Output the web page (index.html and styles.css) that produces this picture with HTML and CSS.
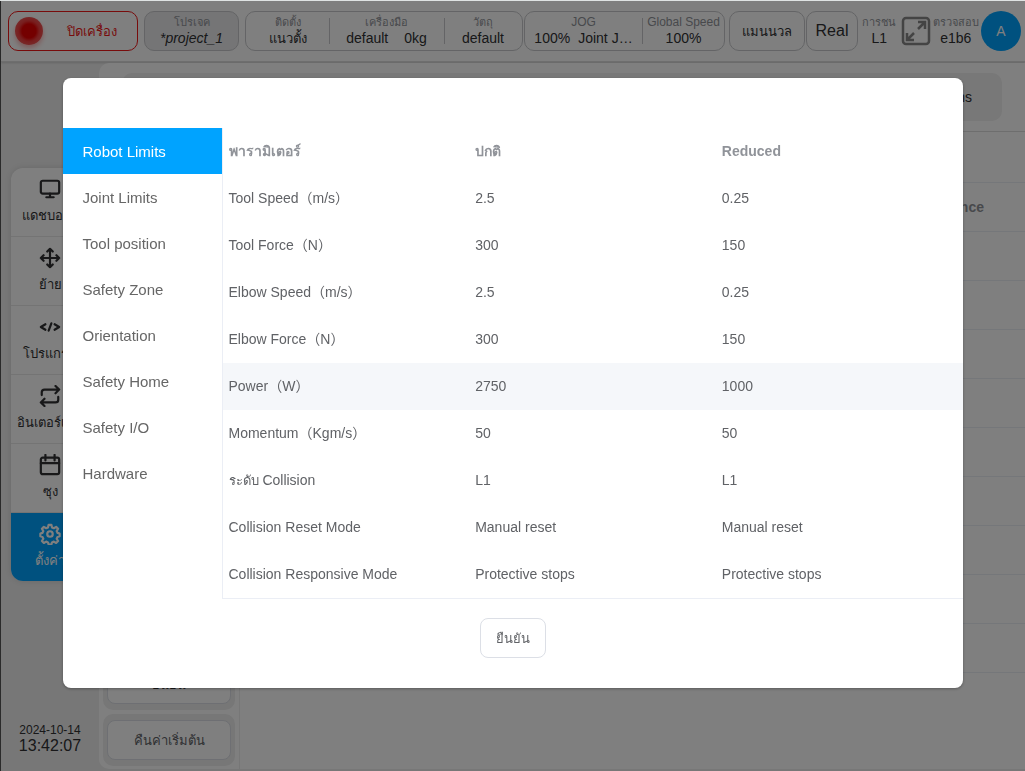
FILE: index.html
```html
<!DOCTYPE html>
<html lang="th">
<head>
    <meta charset="UTF-8">
    <meta name="viewport" content="width=device-width, initial-scale=1.0">
    <title>Robot Limits</title>
    <link rel="stylesheet" href="styles.css">
</head>
<body>
    <div class="app">
        <header class="topbar">
            <button class="box power"><span class="led"></span><span class="power-text">ปิดเครื่อง</span></button>
            <button class="box project"><span class="label thai">โปรเจค</span><em class="value">*project_1</em></button>
            <div class="cluster">
                <div class="box setup">
                    <div class="stat mount"><span class="label thai">ติดตั้ง</span><span class="value thai">แนวตั้ง</span></div>
                    <span class="divider"></span>
                    <div class="stat wide"><span class="label thai">เครื่องมือ</span><span class="value pair"><span>default</span><span>0kg</span></span></div>
                    <span class="divider"></span>
                    <div class="stat"><span class="label thai">วัตถุ</span><span class="value">default</span></div>
                </div>
                <div class="box speed">
                    <div class="stat wide"><span class="label">JOG</span><span class="value jog"><span>100%</span><span>Joint J…</span></span></div>
                    <span class="divider"></span>
                    <div class="stat"><span class="label">Global Speed</span><span class="value">100%</span></div>
                </div>
            </div>
            <div class="cluster end">
                <button class="box manual">แมนนวล</button>
                <button class="box real">Real</button>
                <div class="stat info"><span class="label thai">การชน</span><span class="value">L1</span></div>
                <button class="expand" aria-label="Full screen">
                    <svg viewBox="0 0 30 30" width="30" height="30" fill="none" stroke="currentColor" stroke-width="2.500">
                        <rect x="2" y="2" width="26" height="26" rx="3"/>
                        <path d="M17 13L24 6M17 6H24V13M13 17L6 24M6 17V24H13"/>
                    </svg>
                </button>
                <div class="stat"><span class="label thai">ตรวจสอบ</span><span class="value">e1b6</span></div>
                <button class="avatar">A</button>
            </div>
        </header>

        <div class="main">
            <aside class="sidebar">
                <nav class="nav">
                    <a href="#" class="nav-item">
                        <svg viewBox="0 0 24 24"><rect x="2" y="3" width="20" height="14" rx="2"/><path d="M12 17v4M8 21h8"/></svg>
                        <span>แดชบอร์ด</span>
                    </a>
                    <a href="#" class="nav-item">
                        <svg viewBox="0 0 24 24"><path d="M12 2v20M2 12h20M9 5l3-3 3 3M9 19l3 3 3-3M5 9l-3 3 3 3M19 9l3 3-3 3"/></svg>
                        <span>ย้าย</span>
                    </a>
                    <a href="#" class="nav-item">
                        <svg viewBox="0 0 24 24"><path d="M7 9l-5 3 5 3M17 9l5 3-5 3M13.500 8l-3 8"/></svg>
                        <span>โปรแกรม</span>
                    </a>
                    <a href="#" class="nav-item">
                        <svg viewBox="0 0 24 24"><path d="M18 1l4 4-4 4M3 11V8a3 3 0 0 1 3-3h16M6 23l-4-4 4-4M21 13v3a3 3 0 0 1-3 3H2"/></svg>
                        <span>อินเตอร์เฟซ</span>
                    </a>
                    <a href="#" class="nav-item">
                        <svg viewBox="0 0 24 24"><rect x="2" y="4" width="20" height="18" rx="2"/><path d="M7 1v6M17 1v6M2 10h20"/></svg>
                        <span>ซุง</span>
                    </a>
                    <a href="#" class="nav-item active">
                        <svg viewBox="0 0 24 24"><circle cx="12" cy="12" r="3"/><path d="M10.500 2h3l.7 2.800 2 .9 2.500-1.500 2.100 2.100-1.500 2.500.9 2 2.300.7v3l-2.300.7-.9 2 1.500 2.500-2.100 2.100-2.500-1.500-2 .9-.7 2.300h-3l-.7-2.300-2-.9-2.500 1.500-2.100-2.100 1.500-2.500-.9-2-2.300-.7v-3l2.300-.7.9-2-1.500-2.500 2.100-2.100 2.500 1.500 2-.9z"/></svg>
                        <span>ตั้งค่า</span>
                    </a>
                </nav>
                <div class="clock">
                    <div class="date">2024-10-14</div>
                    <div class="time">13:42:07</div>
                </div>
            </aside>

            <main class="panel">
                <div class="tabs-wrap">
                    <div class="tabs"><a href="#">Permissions</a></div>
                </div>
                <div class="content">
                    <div class="actions">
                        <div class="action"><button class="dark">ยืนยัน</button></div>
                        <div class="action"><button>คืนค่าเริ่มต้น</button></div>
                    </div>
                    <div class="grid">
                        <div class="grid-row"></div>
                        <div class="grid-row head">Tolerance</div>
                        <div class="grid-row"></div>
                        <div class="grid-row"></div>
                        <div class="grid-row"></div>
                        <div class="grid-row"></div>
                        <div class="grid-row"></div>
                        <div class="grid-row"></div>
                        <div class="grid-row"></div>
                        <div class="grid-row"></div>
                        <div class="grid-row"></div>
                    </div>
                </div>
            </main>
        </div>
    </div>

    <div class="overlay">
        <div class="dialog" role="dialog" aria-label="Robot Limits">
            <div class="dialog-body">
                <nav class="menu">
                    <a href="#" class="active">Robot Limits</a>
                    <a href="#">Joint Limits</a>
                    <a href="#">Tool position</a>
                    <a href="#">Safety Zone</a>
                    <a href="#">Orientation</a>
                    <a href="#">Safety Home</a>
                    <a href="#">Safety I/O</a>
                    <a href="#">Hardware</a>
                </nav>
                <table class="limits">
                    <thead>
                        <tr><th>พารามิเตอร์</th><th>ปกติ</th><th>Reduced</th></tr>
                    </thead>
                    <tbody>
                        <tr><td>Tool Speed（m/s）</td><td>2.5</td><td>0.25</td></tr>
                        <tr><td>Tool Force（N）</td><td>300</td><td>150</td></tr>
                        <tr><td>Elbow Speed（m/s）</td><td>2.5</td><td>0.25</td></tr>
                        <tr><td>Elbow Force（N）</td><td>300</td><td>150</td></tr>
                        <tr class="hover"><td>Power（W）</td><td>2750</td><td>1000</td></tr>
                        <tr><td>Momentum（Kgm/s）</td><td>50</td><td>50</td></tr>
                        <tr><td><span class="thai">ระดับ</span> Collision</td><td>L1</td><td>L1</td></tr>
                        <tr><td>Collision Reset Mode</td><td>Manual reset</td><td>Manual reset</td></tr>
                        <tr><td>Collision Responsive Mode</td><td>Protective stops</td><td>Protective stops</td></tr>
                    </tbody>
                </table>
            </div>
            <div class="dialog-footer">
                <button class="confirm">ยืนยัน</button>
            </div>
        </div>
    </div>
</body>
</html>
```
FILE: styles.css
```css
* {
    box-sizing: border-box;
}
body {
    margin: 0;
    font-family: "Liberation Sans", Arial, "Noto Sans CJK SC", sans-serif;
    font-size: 14px;
    color: #303133;
    background: #fff;
    border-top: 1px solid #dfe3e3;
    overflow: hidden;
}
button {
    font-family: inherit;
    color: inherit;
    cursor: pointer;
}
a {
    color: inherit;
    text-decoration: none;
}
.app {
    height: calc(100vh - 1px);
    display: flex;
    flex-direction: column;
    border-left: 1px solid #555;
    background: #eee;
}

/* top bar */
.topbar {
    height: 61px;
    flex-shrink: 0;
    display: flex;
    align-items: center;
    gap: 4px;
    padding: 0 4px 0 7px;
    background: #fff;
    border-bottom: 1px solid #ddd;
    box-shadow: 0 1px 2px rgba(0, 0, 0, 0.15);
}
.box {
    height: 40px;
    flex-shrink: 0;
    border: 1px solid #c8c9cc;
    border-radius: 10px;
    background: #fff;
    padding: 0;
    display: flex;
    align-items: center;
    justify-content: center;
}
.power {
    width: 130px;
    margin-right: 2px;
    border-color: #f01818;
    color: #f01818;
    font-size: 13px;
    padding: 0 6px;
}
.led {
    width: 28px;
    height: 28px;
    border-radius: 50%;
    background: radial-gradient(circle, #e80000 35%, #f03c3c 52%, #f07878);
    box-shadow: 0 3px 5px rgba(240, 0, 0, 0.3);
}
.power-text {
    flex: 1;
    padding-left: 10px;
}
.project {
    width: 95px;
    margin-right: 2px;
    flex-direction: column;
    background: #eaeaec;
}
.label {
    font-size: 12px;
    line-height: 15px;
    color: #909399;
    white-space: nowrap;
}
.label.thai {
    font-size: 11px;
}
.value {
    font-size: 14px;
    line-height: 17px;
    color: #303133;
    white-space: nowrap;
}
.value.thai {
    font-size: 13px;
}
.cluster {
    display: flex;
    align-items: center;
    gap: 1px;
}
.end {
    flex: 1;
}
.setup {
    width: 278px;
}
.speed {
    width: 201px;
}
.stat {
    flex: 1 0 78px;
    display: flex;
    flex-direction: column;
    align-items: center;
}
.stat.mount {
    flex-basis: 83px;
}
.stat.wide {
    flex-basis: 114px;
}
.divider {
    width: 1px;
    height: 26px;
    background: #c8c9cc;
}
.end .stat {
    flex: 1 0 auto;
}
.stat.info {
    padding: 0 2px;
}
.pair {
    display: flex;
    gap: 16px;
}
.jog {
    display: flex;
    gap: 8px;
}
.manual {
    width: 76px;
    font-size: 13px;
}
.real {
    width: 52px;
    font-size: 16px;
}
.expand {
    border: 0;
    padding: 0;
    background: none;
    color: #888;
    height: 30px;
}
.avatar {
    width: 40px;
    height: 40px;
    flex-shrink: 0;
    border: 0;
    border-radius: 50%;
    background: #00a3ff;
    color: #fff;
    font-size: 14px;
    padding: 0;
}

/* left navigation */
.main {
    flex: 1;
    min-height: 0;
    display: flex;
}
.sidebar {
    width: 98px;
    display: flex;
    flex-direction: column;
    justify-content: space-between;
    padding: 106px 10px 16px;
}
.nav {
    border-radius: 12px;
    overflow: hidden;
    background: #fff;
    box-shadow: 0 0 6px rgba(0, 0, 0, 0.12);
}
.nav-item {
    height: 69px;
    display: flex;
    flex-direction: column;
    align-items: center;
    padding-top: 10px;
    gap: 6px;
    border-bottom: 1px solid #e8e8e8;
    font-size: 13px;
    line-height: 20px;
    white-space: nowrap;
}
.nav-item svg {
    width: 22px;
    height: 22px;
    flex-shrink: 0;
    fill: none;
    stroke: currentColor;
    stroke-width: 2.4;
    stroke-linecap: round;
    stroke-linejoin: round;
}
.nav-item.active {
    height: 68px;
    background: #00a3ff;
    color: #fff;
    border-bottom: 0;
}
.clock {
    text-align: center;
    white-space: nowrap;
}
.date {
    font-size: 12px;
    line-height: 14px;
}
.time {
    font-size: 16px;
    line-height: 18px;
}

/* page behind the dialog */
.panel {
    flex: 1;
    display: flex;
    flex-direction: column;
    margin: 1px 0 2px;
    background: #fff;
    border-radius: 10px 0 0 10px;
}
.tabs-wrap {
    padding: 10px 23px;
    border-bottom: 1px solid #ddd;
}
.tabs {
    height: 48px;
    display: flex;
    align-items: center;
    justify-content: flex-end;
    padding-right: 30px;
    border-radius: 10px;
    background: #f0f0f0;
}
.content {
    flex: 1;
    min-height: 0;
    display: flex;
}
.actions {
    width: 141px;
    display: flex;
    flex-direction: column;
    justify-content: flex-end;
    gap: 4px;
    padding: 3px 4px;
    border-right: 1px solid #eee;
}
.action {
    padding: 6px 4px;
    border-radius: 10px;
    background: #eee;
}
.action button {
    display: block;
    width: 100%;
    height: 40px;
    border: 1px solid #dcdfe6;
    border-radius: 8px;
    background: #fff;
    color: #606266;
    font-size: 13px;
}
.action .dark {
    color: #303133;
}
.grid {
    flex: 1;
}
.grid-row {
    height: 49px;
    border-bottom: 1px solid #ebeef5;
}
.grid-row:first-child {
    height: 51px;
}
.grid-row.head {
    padding-right: 41px;
    text-align: right;
    line-height: 48px;
    font-weight: bold;
    color: #909399;
}

/* dialog */
.overlay {
    position: fixed;
    top: 1px;
    right: 0;
    bottom: 0;
    left: 0;
    display: flex;
    align-items: flex-start;
    justify-content: center;
    padding-top: 10vh;
    background: rgba(0, 0, 0, 0.5);
}
.dialog {
    width: 90%;
    max-width: 900px;
    padding: 50px 0 30px;
    background: #fff;
    border-radius: 8px;
    box-shadow: 0 1px 3px rgba(0, 0, 0, 0.3);
}
.dialog-body {
    display: flex;
}
.menu {
    width: 159px;
    flex-shrink: 0;
}
.menu a {
    display: block;
    height: 46px;
    padding-left: 20px;
    font-size: 15px;
    line-height: 48px;
    color: #666;
}
.menu a.active {
    background: #00a3ff;
    color: #fff;
}
.limits {
    flex: 1;
    table-layout: fixed;
    border-collapse: separate;
    border-spacing: 0;
    border-left: 1px solid #ebeef5;
    border-bottom: 1px solid #ebeef5;
    color: #606266;
    font-size: 14px;
}
.limits th,
.limits td {
    height: 47px;
    padding: 0 6px;
    text-align: left;
    line-height: 23px;
    width: 33%;
}
.limits th {
    color: #909399;
}
.limits .thai {
    font-size: 13px;
}
.limits .hover td {
    background: #f5f7fa;
}
.dialog-footer {
    padding-top: 19px;
    text-align: center;
}
.confirm {
    height: 40px;
    padding: 0 15px;
    border: 1px solid #dcdfe6;
    border-radius: 8px;
    background: #fff;
    color: #606266;
    font-size: 13px;
}
```
